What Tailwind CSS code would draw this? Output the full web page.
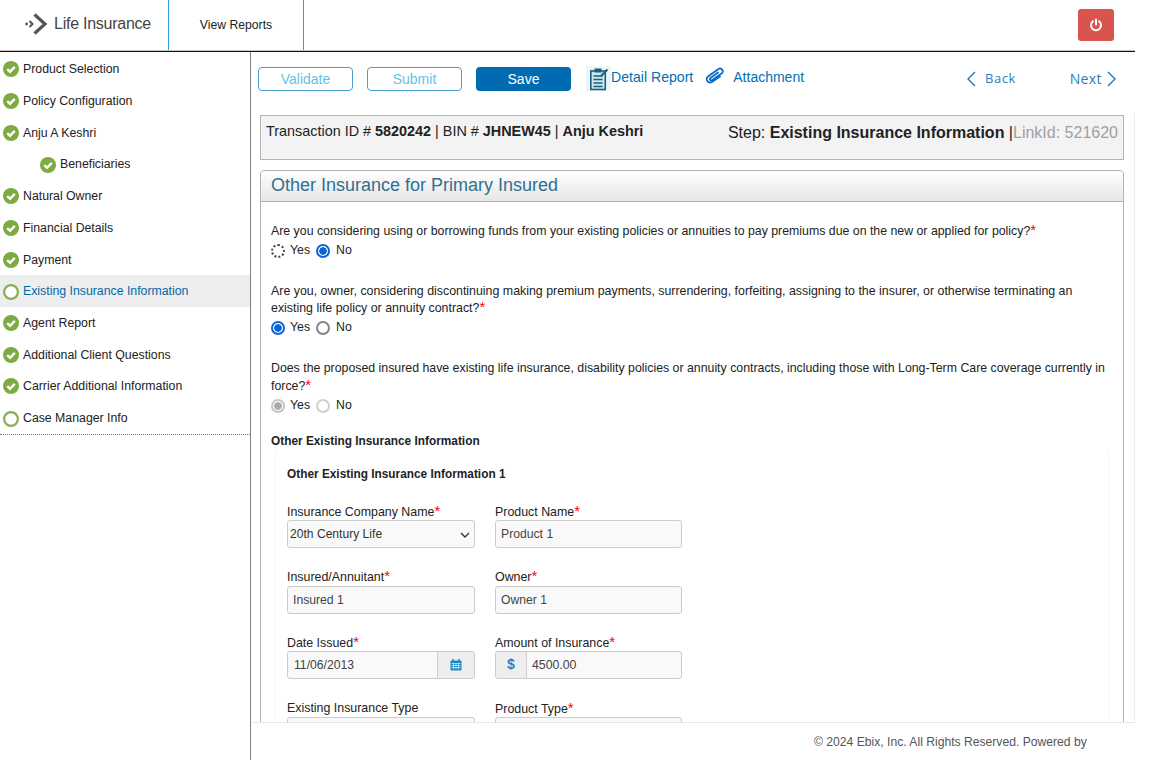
<!DOCTYPE html>
<html>
<head>
<meta charset="utf-8">
<script src="https://cdn.jsdelivr.net/npm/@tailwindcss/browser@4"></script>
</head>
<body class="w-[1152px] h-[760px] overflow-hidden bg-white font-['Liberation_Sans',Arial,sans-serif] text-[12.3px] text-[#222]">
<svg width="0" height="0" class="absolute">
  <defs>
    <symbol id="ok" viewBox="0 0 16 16"><circle cx="8" cy="8" r="8" fill="#7dab3f"/><path d="M4.3 8.2 7 10.8 11.8 5.8" fill="none" stroke="#fff" stroke-width="2.4"/></symbol>
    <symbol id="ring" viewBox="0 0 16 16"><circle cx="8" cy="8" r="6.9" fill="#fff" stroke="#8aae52" stroke-width="2.2"/></symbol>
  </defs>
</svg>

<header class="h-[52px] w-[1135px] border-b border-[#111] shadow-[inset_0_-1px_0_#c8c8c8] flex items-stretch">
  <div class="w-[169px] flex items-center border-r border-[#2a9fd8] pl-[25px] pb-[3px] mb-[1px]">
    <svg width="23" height="22" viewBox="0 0 23 22" class="mr-[6px]"><circle cx="1.6" cy="11" r="1.4" fill="#555"/><path d="M4.5 8 7.5 11 4.5 14" fill="none" stroke="#555" stroke-width="2"/><path d="M9.5 1.5 20 11 9.5 20.5" fill="none" stroke="#555" stroke-width="3.2"/></svg>
    <span class="text-[16px] text-[#444] tracking-[-0.25px]">Life Insurance</span>
  </div>
  <div class="w-[135px] flex items-center justify-center border-r border-[#2a9fd8] mb-[1px] text-[12.2px] text-[#222]">View Reports</div>
  <div class="flex-1 flex justify-end pr-[21px] pt-[9px]">
    <button class="w-[36px] h-[32px] rounded-[3px] bg-[#d9534f] flex items-center justify-center">
      <svg width="14" height="14" viewBox="0 0 14 14" fill="none" stroke="#fff" stroke-width="2" stroke-linecap="round"><path d="M4 3.2A5 5 0 1 0 10 3.2"/><path d="M7 1.5V6.5"/></svg>
    </button>
  </div>
</header>

<div class="flex h-[708px]">
  <aside class="w-[251px] shrink-0 border-r border-[#808080]">
    <ul class="pt-[1px] border-b border-dotted border-[#777] h-[383px]">
      <li class="h-[31.75px] pt-[1px] flex items-center pl-[3px] gap-[4px]"><svg class="w-4 h-4"><use href="#ok"/></svg>Product Selection</li>
      <li class="h-[31.75px] pt-[1px] flex items-center pl-[3px] gap-[4px]"><svg class="w-4 h-4"><use href="#ok"/></svg>Policy Configuration</li>
      <li class="h-[31.75px] pt-[1px] flex items-center pl-[3px] gap-[4px]"><svg class="w-4 h-4"><use href="#ok"/></svg>Anju A Keshri</li>
      <li class="h-[31.75px] pt-[1px] flex items-center pl-[40px] gap-[4px]"><svg class="w-4 h-4"><use href="#ok"/></svg>Beneficiaries</li>
      <li class="h-[31.75px] pt-[1px] flex items-center pl-[3px] gap-[4px]"><svg class="w-4 h-4"><use href="#ok"/></svg>Natural Owner</li>
      <li class="h-[31.75px] pt-[1px] flex items-center pl-[3px] gap-[4px]"><svg class="w-4 h-4"><use href="#ok"/></svg>Financial Details</li>
      <li class="h-[31.75px] pt-[1px] flex items-center pl-[3px] gap-[4px]"><svg class="w-4 h-4"><use href="#ok"/></svg>Payment</li>
      <li class="h-[31.75px] pt-[1px] flex items-center pl-[3px] gap-[4px] bg-[#eeeeee] text-[#0069aa]"><svg class="w-4 h-4"><use href="#ring"/></svg>Existing Insurance Information</li>
      <li class="h-[31.75px] pt-[1px] flex items-center pl-[3px] gap-[4px]"><svg class="w-4 h-4"><use href="#ok"/></svg>Agent Report</li>
      <li class="h-[31.75px] pt-[1px] flex items-center pl-[3px] gap-[4px]"><svg class="w-4 h-4"><use href="#ok"/></svg>Additional Client Questions</li>
      <li class="h-[31.75px] flex items-center pl-[3px] gap-[4px]"><svg class="w-4 h-4"><use href="#ok"/></svg>Carrier Additional Information</li>
      <li class="h-[31.75px] pt-[1px] flex items-center pl-[3px] gap-[4px]"><svg class="w-4 h-4"><use href="#ring"/></svg>Case Manager Info</li>
    </ul>
  </aside>

  <main class="w-[884px] flex flex-col">
    <div class="h-[670px] overflow-hidden">
      <div class="h-[61px] flex items-start pt-[15px] pl-[7px]">
        <button class="w-[95px] h-[24px] rounded-[4px] border border-[#4a9fd0] text-[#67bfe6] text-[14px]">Validate</button>
        <button class="ml-[14px] w-[95px] h-[24px] rounded-[4px] border border-[#4a9fd0] text-[#67bfe6] text-[14px]">Submit</button>
        <button class="ml-[14px] w-[95px] h-[24px] rounded-[4px] bg-[#006bb0] text-white text-[14px]">Save</button>
        <svg width="25" height="25" viewBox="0 0 25 25" class="ml-[15px] mt-[-1px]"><rect width="25" height="25" fill="#eef5f8"/><rect x="4.8" y="5" width="14.5" height="18.5" fill="#cfe5ee" stroke="#17607f" stroke-width="1.6"/><rect x="8.5" y="2.5" width="7" height="4" fill="#17607f"/><path d="M7.5 10H16.5M7.5 13.5H16.5M7.5 17H16.5M7.5 20.5H16.5" stroke="#17607f" stroke-width="1.4"/><path d="M15 10 21.5 3.5" stroke="#17607f" stroke-width="2"/></svg>
        <a class="text-[14.1px] text-[#0070b5] leading-[20px]">Detail Report</a>
        <svg width="20" height="18" viewBox="0 0 20 18" fill="none" stroke="#0a6cc8" stroke-width="1.8" stroke-linecap="round" class="ml-[12px]"><path d="M13 5.5 5.5 11C4 12.3 5.5 14 7.3 13L16.5 6.5C19.4 4.4 16.5.4 13.5 2L3 9.5C0 12 3 17 7 15L15 9.5"/></svg>
        <a class="ml-[8px] text-[14px] text-[#0070b5] leading-[20px]">Attachment</a>
        <svg width="10" height="16" viewBox="0 0 10 16" fill="none" stroke="#1a78c2" stroke-width="1.4" class="ml-[162px] mt-[4px]"><path d="M9 1 2 8l7 7"/></svg>
        <span class="ml-[9px] mt-[2px] font-['Open_Sans',sans-serif] text-[13px] tracking-[0.5px] text-[#2a7fb8]">Back</span>
        <span class="ml-[54px] mt-[1px] font-['Open_Sans',sans-serif] text-[14px] tracking-[0.3px] text-[#2a7fb8]">Next</span>
        <svg width="10" height="16" viewBox="0 0 10 16" fill="none" stroke="#1a78c2" stroke-width="1.4" class="ml-[5px] mt-[4px]"><path d="M1 1l7 7-7 7"/></svg>
      </div>

      <div class="h-[700px] pt-[2px] pl-[9px] border-r border-[#eeeeee]">
      <div class="w-[864px] h-[45px] border border-[#b3b3b3] bg-[#f3f3f3] px-[5px] flex justify-between items-start">
        <div class="text-[14.4px] leading-[16px] mt-[7px]">Transaction ID # <b>5820242</b> | BIN # <b>JHNEW45</b> | <b>Anju Keshri</b></div>
        <div class="text-[16px] leading-[18px] mt-[8px]">Step: <b>Existing Insurance Information</b> |<span class="text-[#a0a0a0]">LinkId: 521620</span></div>
      </div>

      <section class="mt-[10px] w-[864px] h-[700px] border border-[#b3b3b3] rounded-t-[4px]">
        <h2 class="h-[31px] border-b border-[#b3b3b3] bg-gradient-to-b from-white to-[#e6e6e6] px-[10px] text-[18px] leading-[29px] text-[#2f6f91] rounded-t-[4px]">Other Insurance for Primary Insured</h2>
        <div class="pt-[21px]">
          <div class="px-[10px]">
          <p class="leading-[17.5px] text-[12.33px]">Are you considering using or borrowing funds from your existing policies or annuities to pay premiums due on the new or applied for policy?<span class="text-[#f00] text-[15px] leading-[0]">*</span></p>
          <div class="h-[20px] flex items-center">
            <input type="radio" name="q1" class="appearance-none w-[14px] h-[14px] m-0 rounded-full border-2 border-dotted border-[#444]"><span class="ml-[5px]">Yes</span>
            <input type="radio" name="q1" checked class="appearance-none w-[14px] h-[14px] m-0 ml-[6px] rounded-full border-2 border-[#0a66d8] bg-[radial-gradient(circle,#0a66d8_3.5px,#fff_4px)]"><span class="ml-[6px]">No</span>
          </div>
          <p class="mt-[22px] leading-[17.5px] w-[830px] text-[12.39px]">Are you, owner, considering discontinuing making premium payments, surrendering, forfeiting, assigning to the insurer, or otherwise terminating an existing life policy or annuity contract?<span class="text-[#f00] text-[15px] leading-[0]">*</span></p>
          <div class="h-[20px] flex items-center">
            <input type="radio" name="q2" checked class="appearance-none w-[14px] h-[14px] m-0 rounded-full border-2 border-[#0a66d8] bg-[radial-gradient(circle,#0a66d8_3.5px,#fff_4px)]"><span class="ml-[5px]">Yes</span>
            <input type="radio" name="q2" class="appearance-none w-[14px] h-[14px] m-0 ml-[6px] rounded-full border-2 border-[#85858f]"><span class="ml-[6px]">No</span>
          </div>
          <p class="mt-[21px] leading-[18px] text-[12.33px]">Does the proposed insured have existing life insurance, disability policies or annuity contracts, including those with Long-Term Care coverage currently in force?<span class="text-[#f00] text-[15px] leading-[0]">*</span></p>
          <div class="mt-[1px] h-[20px] flex items-center">
            <input type="radio" name="q3" checked disabled class="appearance-none w-[14px] h-[14px] m-0 rounded-full border-2 border-[#c4c4c4] bg-[radial-gradient(circle,#aaaaaa_3.5px,#fff_4px)]"><span class="ml-[5px]">Yes</span>
            <input type="radio" name="q3" disabled class="appearance-none w-[14px] h-[14px] m-0 ml-[6px] rounded-full border-2 border-[#d0d0d0]"><span class="ml-[6px]">No</span>
          </div>
          <p class="mt-[17px] leading-[17.5px] font-bold text-[11.85px]">Other Existing Insurance Information</p>
          </div>
          <div class="mx-[14px] pl-[11px] border-x border-[#f4f4f4] h-[400px]">
            <p class="pt-[16px] leading-[17.5px] font-bold text-[11.85px]">Other Existing Insurance Information 1</p>
            <div class="mt-[20px] grid grid-cols-[188px_187px] gap-x-[20px]">
              <div class="h-[65px]">
                <label class="block h-[16px] leading-[17px] text-[12.4px]">Insurance Company Name<span class="text-[#f00] text-[15px] leading-[0]">*</span></label>
                <div class="relative">
                  <select class="appearance-none block w-full h-[28px] rounded-[3px] border border-[#ccc] bg-[#f9f9f9] pl-[2px] pt-[2px] text-[12.1px] text-[#333]"><option>20th Century Life</option></select>
                  <svg width="10" height="6" viewBox="0 0 10 6" fill="none" stroke="#333" stroke-width="1.4" class="absolute right-[5px] top-[12px]"><path d="M1 1l4 4 4-4"/></svg>
                </div>
              </div>
              <div>
                <label class="block h-[16px] leading-[17px] text-[12.4px]">Product Name<span class="text-[#f00] text-[15px] leading-[0]">*</span></label>
                <input value="Product 1" class="block w-full h-[28px] rounded-[3px] border border-[#ccc] bg-[#f9f9f9] px-[5px] text-[12.2px] text-[#444]">
              </div>
              <div class="h-[66px]">
                <label class="block h-[17px] leading-[16px] text-[12.4px]">Insured/Annuitant<span class="text-[#f00] text-[15px] leading-[0]">*</span></label>
                <input value="Insured 1" class="block w-full h-[28px] rounded-[3px] border border-[#ccc] bg-[#f9f9f9] px-[5px] text-[12.2px] text-[#444]">
              </div>
              <div>
                <label class="block h-[17px] leading-[16px] text-[12.4px]">Owner<span class="text-[#f00] text-[15px] leading-[0]">*</span></label>
                <input value="Owner 1" class="block w-full h-[28px] rounded-[3px] border border-[#ccc] bg-[#f9f9f9] px-[5px] text-[12.2px] text-[#444]">
              </div>
              <div class="h-[65px]">
                <label class="block h-[16px] leading-[17px] text-[12.4px]">Date Issued<span class="text-[#f00] text-[15px] leading-[0]">*</span></label>
                <div class="flex h-[28px] rounded-[3px] border border-[#ccc] bg-[#f9f9f9]">
                  <input value="11/06/2013" class="w-[149px] px-[6px] pt-[2px] text-[12.2px] text-[#444]">
                  <span class="flex-1 border-l border-[#ccc] bg-[#eee] rounded-r-[3px] flex items-center justify-center">
                    <svg width="12" height="12" viewBox="0 0 12 12"><rect x="0.5" y="1.5" width="11" height="10" rx="1" fill="#1a84c4"/><path d="M3 0v3M9 0v3" stroke="#1a84c4" stroke-width="1.4"/><path d="M1.5 4.5h9M1.5 6.5h9M1.5 8.5h9M3.5 4.5v6M6 4.5v6M8.5 4.5v6" stroke="#eaf4fa" stroke-width=".7"/></svg>
                  </span>
                </div>
              </div>
              <div>
                <label class="block h-[16px] leading-[17px] text-[12.4px]">Amount of Insurance<span class="text-[#f00] text-[15px] leading-[0]">*</span></label>
                <div class="flex h-[28px] rounded-[3px] border border-[#ccc] bg-[#f9f9f9]">
                  <span class="w-[31px] border-r border-[#ccc] bg-[#eee] rounded-l-[3px] flex items-center justify-center text-[#1a84c4] font-bold text-[14px]">$</span>
                  <input value="4500.00" class="flex-1 min-w-0 px-[5px] pt-[2px] text-[12.3px] text-[#444]">
                </div>
              </div>
              <div>
                <label class="block h-[17px] leading-[16px] text-[12.4px]">Existing Insurance Type</label>
                <div class="h-[28px] rounded-[3px] border border-[#ccc] bg-[#f9f9f9]"></div>
              </div>
              <div>
                <label class="block h-[17px] leading-[18px] text-[12.4px]">Product Type<span class="text-[#f00] text-[15px] leading-[0]">*</span></label>
                <div class="h-[28px] rounded-[3px] border border-[#ccc] bg-[#f9f9f9]"></div>
              </div>
            </div>
          </div>
        </div>
      </section>
      </div>
    </div>
    <footer class="h-[38px] border-t border-[#e8e8e8] bg-white text-[12.15px] text-[#555] pl-[563px] pt-[12px] leading-[14px] z-10">© 2024 Ebix, Inc. All Rights Reserved. Powered by</footer>
  </main>
</div>
</body>
</html>
